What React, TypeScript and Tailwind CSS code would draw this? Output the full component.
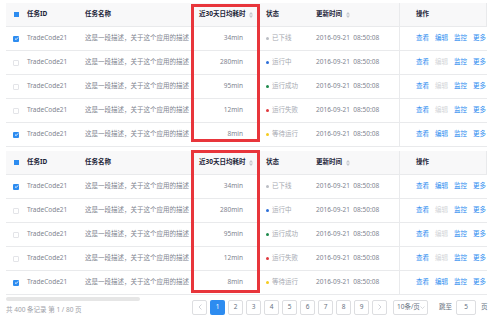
import React from 'react';

interface Row {
  checked: boolean;
  time: string;
  status: string;
  dot: string;
  edit: boolean;
}

const rows: Row[] = [
  { checked: true, time: '34min', status: '已下线', dot: 'bg-[#bbbec4]', edit: true },
  { checked: false, time: '280min', status: '运行中', dot: 'bg-[#2d6fd8]', edit: false },
  { checked: false, time: '95min', status: '运行成功', dot: 'bg-[#1e8a4c]', edit: false },
  { checked: false, time: '12min', status: '运行失败', dot: 'bg-[#e0393e]', edit: false },
  { checked: true, time: '8min', status: '等待运行', dot: 'bg-[#f5cc1f]', edit: true },
];

const cols = 'grid grid-cols-[16px_58px_112px_68px_50px_89px_88px]';

function SortIcon() {
  return (
    <svg width="4" height="6" viewBox="0 0 4 6" className="ml-[4px] shrink-0">
      <path d="M2 0 L4 2.4 H0 Z" fill="#c5c8ce" />
      <path d="M2 6 L4 3.6 H0 Z" fill="#c5c8ce" />
    </svg>
  );
}

function Checkbox({ checked }: { checked: boolean }) {
  if (checked) {
    return (
      <div className="w-[6px] h-[6px] rounded-[1px] bg-[#2d8cf0] flex items-center justify-center">
        <svg width="5" height="5" viewBox="0 0 10 10">
          <path d="M2 5.2 L4.2 7.3 L8.2 2.8" stroke="white" strokeWidth="1.8" fill="none" />
        </svg>
      </div>
    );
  }
  return <div className="w-[6px] h-[6px] rounded-[1px] border border-[#e3e4e8] bg-white" />;
}

function DataTable({ redTop, redBottom }: { redTop: string; redBottom: string }) {
  return (
    <div className="relative mx-[6px] w-[481px]">
      {/* header */}
      <div className={`${cols} h-[24px] bg-[#f8f8f9] border-b border-[#e9eaec] font-bold text-[#1c2438]`}>
        <div className="flex items-center pl-[8px]">
          <div className="w-[5px] h-[5px] bg-[#2d8cf0]" />
        </div>
        <div className="flex items-center pl-[5px]">任务ID</div>
        <div className="flex items-center pl-[5px]">任务名称</div>
        <div className="flex items-center pl-[7px]">
          近30天日均耗时
          <SortIcon />
        </div>
        <div className="flex items-center pl-[6px]">状态</div>
        <div className="flex items-center pl-[6px]">
          更新时间
          <SortIcon />
        </div>
        <div className="flex items-center pl-[16px] border-x border-[#e9eaec]">操作</div>
      </div>
      {rows.map((r, i) => (
        <div key={i} className={`${cols} h-[24px] border-b border-[#e9eaec] text-[#80848f]`}>
          <div className="flex items-center pl-[7px]">
            <Checkbox checked={r.checked} />
          </div>
          <div className="flex items-center pl-[5px]">TradeCode21</div>
          <div className="flex items-center pl-[5px] whitespace-nowrap">这是一段描述，关于这个应用的描述</div>
          <div className="flex items-center justify-end pr-[17px]">{r.time}</div>
          <div className="flex items-center pl-[6px] text-[#a5a8b0]">
            <span className={`w-[3px] h-[3px] rounded-full mr-[3px] ${r.dot}`} />
            {r.status}
          </div>
          <div className="flex items-center pl-[6px] whitespace-pre">2016-09-21  08:50:08</div>
          <div className="flex items-center pl-[16px] gap-[6px] border-l border-[#e9eaec] text-[#2d8cf0]">
            <span>查看</span>
            <span className={r.edit ? 'text-[#2d8cf0]' : 'text-[#d2d4d8]'}>编辑</span>
            <span>监控</span>
            <span>更多</span>
          </div>
        </div>
      ))}
      {/* annotation box */}
      <div
        className={`absolute left-[185px] w-[69px] border-[3px] border-[#e8353b] pointer-events-none ${redTop} ${redBottom}`}
      />
    </div>
  );
}

function PageBtn({ children, active }: { children: React.ReactNode; active?: boolean }) {
  return (
    <div
      className={`w-[15px] h-[15px] shrink-0 rounded-[2px] flex items-center justify-center ${
        active ? 'bg-[#2d8cf0] text-white' : 'border border-[#dddee1] text-[#657180] bg-white'
      }`}
    >
      {children}
    </div>
  );
}

export default function App() {
  return (
    <div
      className="w-[499px] h-[319px] overflow-hidden bg-white text-[6.5px] leading-none"
      style={{ fontFamily: '"Noto Sans", "Noto Sans CJK SC", sans-serif' }}
    >
      <div className="pt-[3px]">
        <DataTable redTop="top-[1px]" redBottom="bottom-[5px]" />
      </div>
      <div className="pt-[4px]">
        <DataTable redTop="-top-[1px]" redBottom="bottom-[2px]" />
      </div>
      {/* footer */}
      <div className="flex h-[24px] text-[#80848f]">
        <div className="w-[192px] shrink-0 pl-[6px] pt-[2px] flex flex-col">
          <div className="w-[134px] h-[4px] rounded-full bg-[#e6e6e6]" />
          <div className="mt-[6px] text-[#9ea1a8] whitespace-pre">共 400 条记录 第 1 / 80 页</div>
        </div>
        <div className="flex items-center gap-[3px] whitespace-nowrap">
          <PageBtn>
            <svg width="4" height="6" viewBox="0 0 4 6">
              <path d="M3.5 0.5 L1 3 L3.5 5.5" stroke="#c5c8ce" strokeWidth="0.8" fill="none" />
            </svg>
          </PageBtn>
          <PageBtn active>1</PageBtn>
          {[2, 3, 4, 5, 6, 7, 8, 9].map((n) => (
            <PageBtn key={n}>{n}</PageBtn>
          ))}
          <PageBtn>
            <svg width="4" height="6" viewBox="0 0 4 6">
              <path d="M0.5 0.5 L3 3 L0.5 5.5" stroke="#c5c8ce" strokeWidth="0.8" fill="none" />
            </svg>
          </PageBtn>
          <div className="ml-[3px] w-[35px] h-[15px] shrink-0 rounded-[2px] border border-[#dddee1] flex items-center justify-between pl-[3px] pr-[2px] text-[#657180]">
            <span>10条/页</span>
            <svg width="5" height="3" viewBox="0 0 5 3">
              <path d="M0.5 0.5 L2.5 2.5 L4.5 0.5" stroke="#c5c8ce" strokeWidth="0.7" fill="none" />
            </svg>
          </div>
          <div className="ml-[8px] text-[#657180]">跳至</div>
          <div className="ml-[1px] w-[20px] h-[15px] shrink-0 rounded-[2px] border border-[#dddee1] flex items-center justify-center text-[#657180]">
            5
          </div>
          <div className="ml-[2px] text-[#657180]">页</div>
        </div>
      </div>
    </div>
  );
}
